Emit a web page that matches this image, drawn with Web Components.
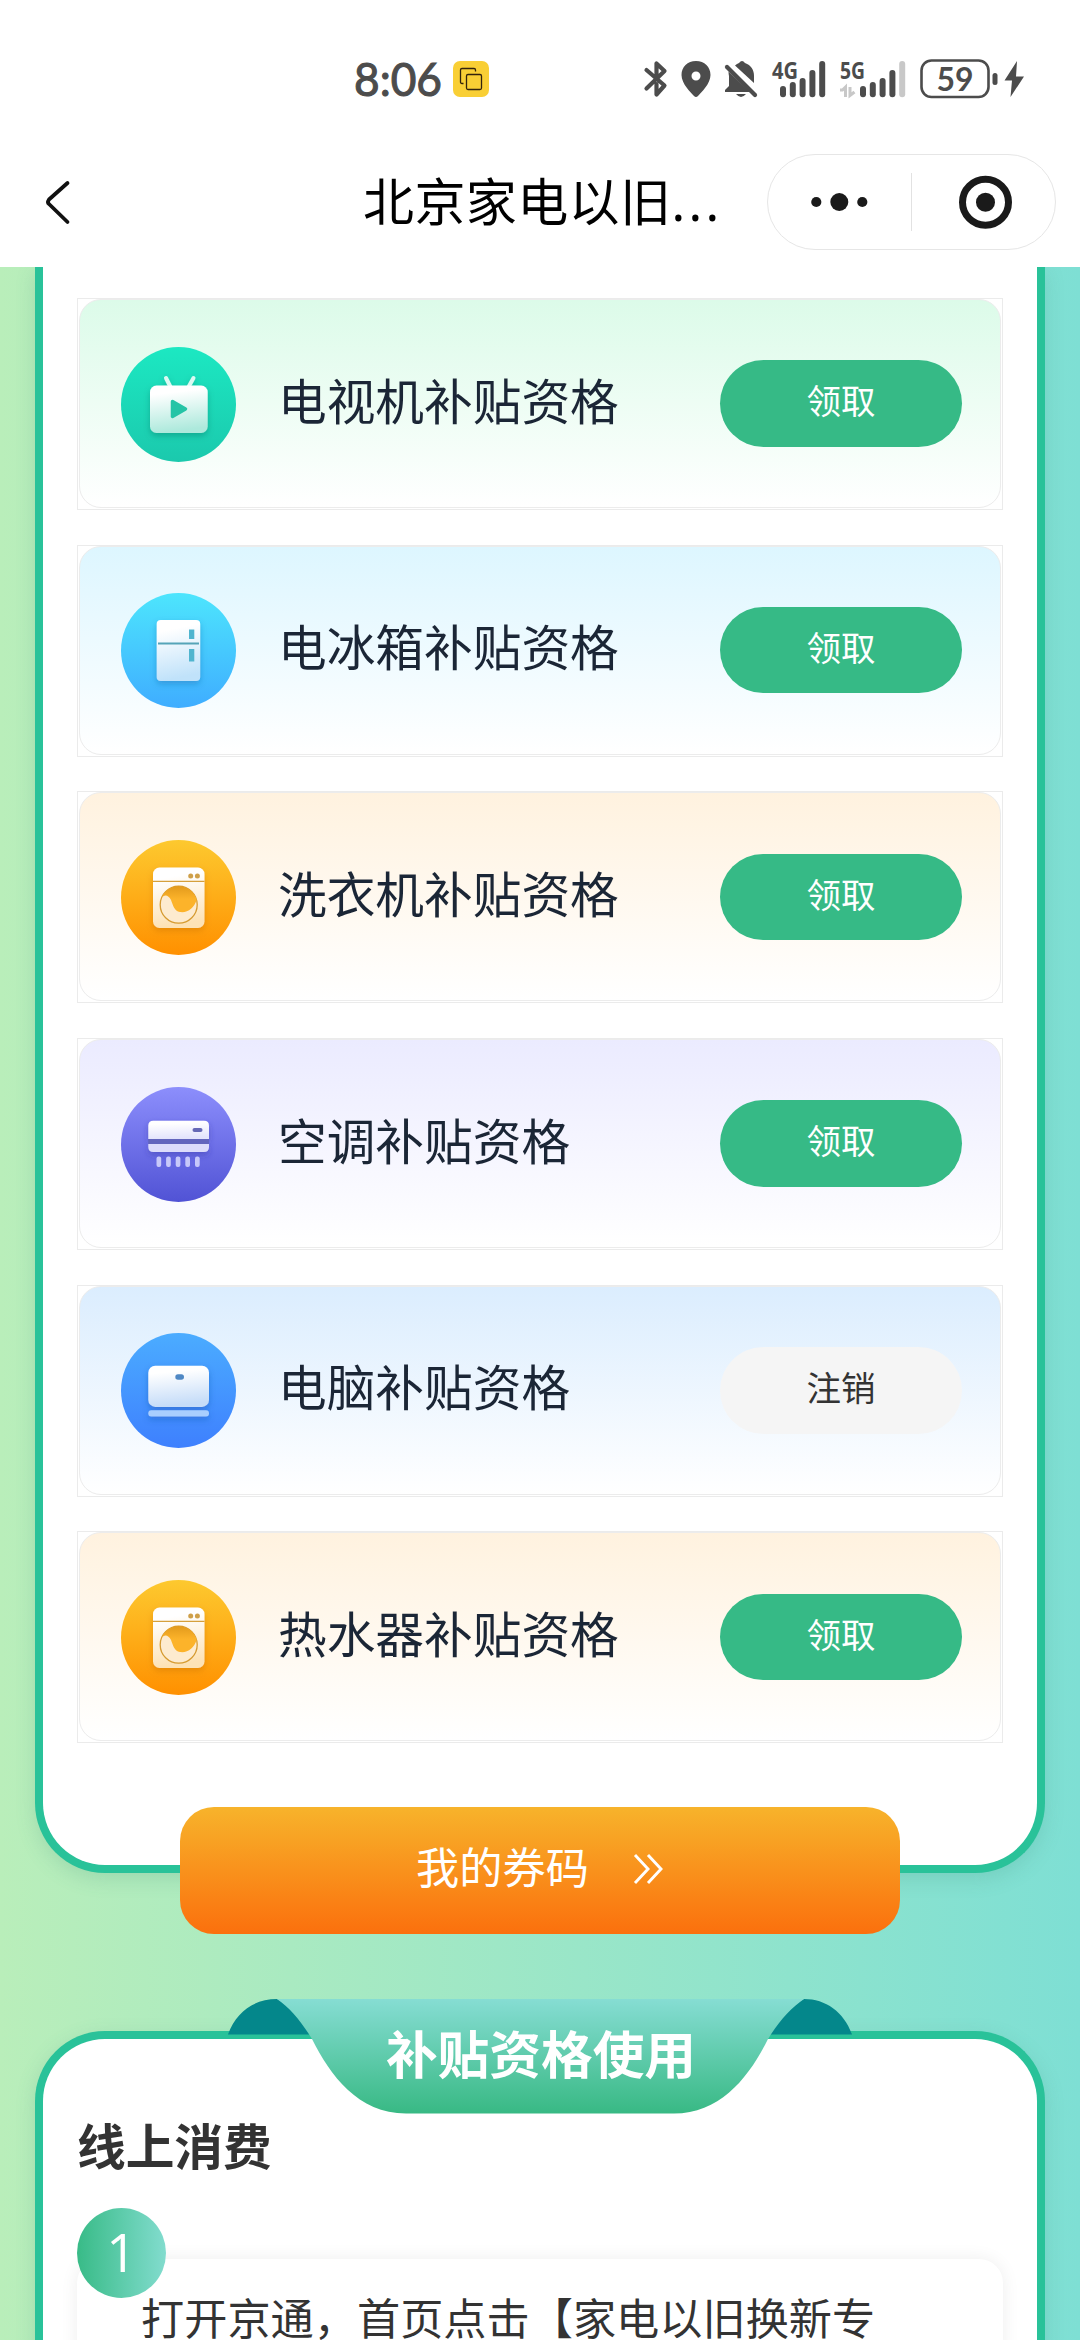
<!DOCTYPE html>
<html lang="zh-CN">
<head>
<meta charset="utf-8">
<title>北京家电以旧换新</title>
<style>
html,body{margin:0;padding:0}
body{width:1080px;height:2340px;overflow:hidden;background:#fff;font-family:"Noto Sans CJK SC",sans-serif;color:#333}
</style>
</head>
<body>
<subsidy-app></subsidy-app>
<script>
const define = (name, html) => customElements.define(name, class extends HTMLElement {
  constructor() {
    super();
    this.attachShadow({ mode: 'open' }).innerHTML = typeof html === 'function' ? html(this) : html;
  }
});

const bars = (x, last) => [86, 82, 78, 70, 61].map((t, i) =>
  `<rect x="${x + i * 9.8}" y="${t - 59}" width="6" height="${97.3 - t}" rx="3" fill="${i === 4 ? last : '#4c4c4c'}"/>`).join('');

define('status-bar', `
<style>
:host{display:flex;box-sizing:border-box;height:134px;padding:59px 0 0 352px;align-items:flex-start;color:#4c4c4c}
svg{display:block;flex:none;overflow:visible;font-family:"Open Sans","Noto Sans",sans-serif}
.time{margin-right:9px}.app{margin-right:155px}.bt{margin-right:14px}.pin{margin-right:13px}.bell{margin-right:15px}
.g4{margin-right:14px}.g5{margin-right:15px}
</style>
<svg class="time" width="92" height="40" fill="#4c4c4c"><text x="2" y="37" font-size="46" font-weight="400" textLength="88" lengthAdjust="spacingAndGlyphs" font-family="Lato" stroke="#4c4c4c" stroke-width="1.1">8:06</text></svg>
<svg class="app" width="36" height="40"><rect y="2" width="36" height="36" rx="7" fill="#f9cf35"/><g fill="none" stroke="#33230c" stroke-width="1.3"><rect x="13.5" y="15.5" width="15" height="15" rx="1.5"/><path d="M10.5 24.500H9Q7.500 24.500 7.500 23V11Q7.500 9.500 9 9.500H21Q22.500 9.500 22.500 11V12.500"/></g></svg>
<svg class="bt" width="23" height="40" fill="none" stroke="#4c4c4c" stroke-width="4.200" stroke-linejoin="round" stroke-linecap="round"><path d="M2.500 11 20.500 26.500 12.500 35.500V25M2.500 29.500 20.500 12 12.500 4.500V17"/></svg>
<svg class="pin" width="30" height="40"><path fill="#4c4c4c" fill-rule="evenodd" d="M15 2C6.500 2 .5 8 .5 16C.5 25 10 33.500 13 37Q15 39 17 37C20 33.500 29.500 25 29.500 16C29.500 8 23.500 2 15 2ZM15 12.500A4.500 4.500 0 1 1 15 21.500A4.500 4.500 0 1 1 15 12.500Z"/></svg>
<svg class="bell" width="33" height="40" fill="#4c4c4c"><path d="M4.500 12.500 26 33H1V31L5 27V17Q4.500 14.500 4.500 12.500ZM11 6.500Q13 4.500 15 4 18 0 21 4C27 6 30 11 30 17V24ZM12 35H22Q17 41 12 35Z"/><path d="M3 8 31 36" stroke="#4c4c4c" stroke-width="4.200" stroke-linecap="round"/></svg>
<svg class="g4" width="54" height="40" fill="#4c4c4c"><text x="0" y="20" font-size="23" font-weight="700" textLength="26" lengthAdjust="spacingAndGlyphs">4G</text>${bars(8, '#4c4c4c')}</svg>
<svg class="g5" width="65" height="40" fill="#4c4c4c"><text x="0" y="20" font-size="23" font-weight="700" textLength="25" lengthAdjust="spacingAndGlyphs">5G</text><path d="M0 31H3M2 31.500 5.500 28V38M10 28V36.500L14.500 33" stroke="#c8c8c8" stroke-width="3" fill="none"/>${bars(20, '#c8c8c8')}</svg>
<svg width="105" height="40" fill="#4c4c4c"><rect x="1.500" y="1.500" width="67" height="36.500" rx="10" fill="none" stroke="#4c4c4c" stroke-width="2.600"/><text x="16.500" y="32" font-size="33" font-weight="700" font-family="Lato" textLength="37" lengthAdjust="spacingAndGlyphs">59</text><rect x="72.500" y="14" width="5" height="12" rx="2.500"/><path d="M97 2 84.500 21.500H92L90.500 38 104 17.500H96Z"/></svg>
`);

define('nav-bar', `
<style>
:host{display:flex;box-sizing:border-box;height:133px;align-items:flex-start;padding:20px 24px 0 43px}
svg{display:block;flex:none}
.back{margin-top:25px}
h1{margin:-8px 0 0 290px;font-weight:400;font-size:51px;line-height:106px;letter-spacing:.4px;white-space:nowrap;color:#000}
h1 span{font-family:"Noto Sans",sans-serif;letter-spacing:3.4px}
.capsule{box-sizing:border-box;display:flex;align-items:center;width:289px;height:96px;margin-left:auto;border:1px solid #e6e6e6;border-radius:48px}
.capsule svg{flex:1}.line{width:1px;height:58px;background:#e2e2e2}
</style>
<svg class="back" width="30" height="48" fill="none" stroke="#111" stroke-width="3.800" stroke-linecap="round" stroke-linejoin="round"><path d="M24.500 4 6 20.500Q4 23.500 6 25L24.500 43"/></svg>
<h1>北京家电以旧<span>...</span></h1>
<div class="capsule"><svg width="143" height="94" fill="#1a1a1a"><circle cx="48.300" cy="47" r="5.100"/><circle cx="71.300" cy="47" r="9"/><circle cx="94.300" cy="47" r="5.100"/></svg><div class="line"></div><svg width="143" height="94"><circle cx="73.500" cy="47.300" r="23" fill="none" stroke="#1a1a1a" stroke-width="7"/><circle cx="73.500" cy="47.300" r="9.500" fill="#1a1a1a"/></svg></div>
`);

const washer = {
  from: '#fdc92f', to: '#ff9000', low: '#fde2b5', shade: '#c56c00',
  art: `<rect x="32" y="27.500" width="51.500" height="60.500" rx="6.500" fill="url(#w)"/><path d="M32 41.300H83.500" stroke="#d6a03a" stroke-width="1.200"/><g fill="#cfa04a"><circle cx="69.700" cy="36" r="2.500"/><circle cx="76.400" cy="36" r="2.500"/></g>`,
  over: `<circle cx="57.700" cy="64.700" r="18.500" fill="#fdebcf" stroke="#d69b30" stroke-width="1.300"/><path d="M40.500 58C43 54 47.500 54.500 50 60C52 65 53 71 59 72C67 73 73 68 75.700 60A18.500 18.500 0 0 0 40.500 58Z" fill="url(#d)"/>`
};
const ICONS = {
  tv: { from: '#1ce8c2', to: '#1bc9ad', low: '#ade9dc', shade: '#08715e',
    art: `<path d="M45 31 49.500 40M72.500 31 67.500 40" stroke="#dcfaf3" stroke-width="4" stroke-linecap="round"/><rect x="29" y="38.500" width="57.700" height="47.500" rx="6.500" fill="url(#w)"/>`,
    over: `<path d="M51.500 54.500 64.500 62 51.500 69.500Z" fill="#25c4a6" stroke="#25c4a6" stroke-width="3.500" stroke-linejoin="round"/>` },
  fridge: { from: '#4de5fd', to: '#3fadff', low: '#c0e2fa', shade: '#1667a8',
    art: `<rect x="35.700" y="27" width="43.500" height="61" rx="4" fill="url(#w)"/>`,
    over: `<path d="M37 50.500H78" stroke="#55a4b8" stroke-width="2"/><path d="M68 36.500H73.300V46H68ZM68 56H73.300V68.500H68Z" fill="#50b5cf"/>` },
  washer,
  air: { from: '#8c8efc', to: '#5153d5', low: '#e3e4fc', shade: '#30329b',
    art: `<path d="M32.300 33.700H83Q88 33.700 88 38.700V52H27.300V38.700Q27.300 33.700 32.300 33.700Z" fill="url(#w)"/><path d="M27.300 57H88V60Q88 65 83 65H32.300Q27.300 65 27.300 60Z" fill="#dcdcfb"/>`,
    over: `<path d="M27.300 52H88V57H27.300Z" fill="#6265bd"/><rect x="71.500" y="41" width="10" height="4" rx="2" fill="#6568b6"/><g fill="#c7c8fa">${[35.5, 45.1, 54.7, 64.3, 74].map(x => `<rect x="${x}" y="69.500" width="4.700" height="10.500" rx="2"/>`).join('')}</g>` },
  pc: { from: '#4bacff', to: '#3e80fe', low: '#c5dcf8', shade: '#1a4fa8',
    art: `<rect x="27.300" y="32.700" width="60.700" height="41.200" rx="7" fill="url(#w)"/><rect x="27.300" y="77.300" width="60.700" height="6.200" rx="3" fill="#a9cefe"/>`,
    over: `<rect x="54.300" y="41.300" width="8.700" height="5.400" rx="2.700" fill="#4f88c4"/>` }
};

define('appliance-icon', el => {
  const i = ICONS[el.getAttribute('kind')];
  return `<style>:host{display:block;flex:none;width:115px;height:115px}svg{display:block}</style>
<svg width="115" height="115" viewBox="0 0 115 115"><defs>
<linearGradient id="c" x2="0" y2="1"><stop stop-color="${i.from}"/><stop offset="1" stop-color="${i.to}"/></linearGradient>
<linearGradient id="d" x2="0" y2="1"><stop stop-color="#e29a1c"/><stop offset=".5" stop-color="#fcb32a"/></linearGradient>
<linearGradient id="w" x2=".15" y2="1"><stop offset=".2" stop-color="#fff"/><stop offset="1" stop-color="${i.low}"/></linearGradient>
<filter id="s" x="-20%" y="-20%" width="140%" height="150%"><feDropShadow dx="0" dy="3" stdDeviation="3" flood-color="${i.shade}" flood-opacity=".4"/></filter>
</defs><circle cx="57.500" cy="57.500" r="57.500" fill="url(#c)"/><g filter="url(#s)">${i.art}</g>${i.over}</svg>`;
});

define('pill-button', `
<style>
:host{display:block;flex:none;box-sizing:border-box;width:242px;height:86.500px;border-radius:44px;background:#36ba86;color:#fff;font-size:34.500px;line-height:78px;text-align:center}
:host([plain]){background:#f5f5f5;color:#333}
</style><slot></slot>`);

define('quota-row', el => `
<style>
:host{display:block;box-sizing:border-box;height:212px;border:1px solid #ebebeb;padding:0 1px 1px}
.card{display:flex;align-items:center;box-sizing:border-box;height:209px;border:1px solid #ececec;border-radius:22px;padding:0 38px 0 41px;background:linear-gradient(${el.getAttribute('tint')},#fff)}
.name{flex:1;padding:0 0 10px 42px;font-size:48.700px;line-height:72px;color:#1b2636;white-space:nowrap}
appliance-icon{position:relative;top:.5px}
pill-button{margin-top:-1px}
</style>
<div class="card"><appliance-icon kind="${el.getAttribute('kind')}"></appliance-icon><div class="name"><slot></slot></div><slot name="action"></slot></div>`);

define('panel-frame', `
<style>
:host{display:block;box-sizing:border-box;margin:0 35px;background:#fff;border:8px solid #29c299;box-shadow:0 6px 20px rgba(60,140,120,.2);padding:0 34px}
:host([edge=bottom]){height:1606px;border-top:0;border-radius:0 0 70px 70px;padding-top:31px}
:host([edge=top]){position:relative;height:420px;border-bottom:0;border-radius:70px 70px 0 0;box-sizing:border-box}
</style><slot></slot>`);

define('voucher-button', `
<style>
:host{position:relative;display:flex;align-items:center;justify-content:center;box-sizing:border-box;width:720px;height:127px;margin:-66px auto 0;border-radius:34px;background:linear-gradient(#f7b32b,#fb700d);color:#fff;font-size:43.200px;line-height:64px;padding:0 0 11px 2px}
svg{margin:8px 0 0 43px}
</style><span><slot></slot></span><svg width="34" height="32" fill="none" stroke="#fff" stroke-width="2.900"><path d="M3 2 16 16 3 30M16 2 29 16 16 30"/></svg>`);

define('ribbon-title', `
<style>
:host{position:absolute;left:185px;top:-41px;width:626px;height:116px}
svg,h2{grid-area:1/1}
:host{display:grid}
svg{display:block}
h2{margin:0;padding:16px 0 0;text-align:center;font-size:51.700px;line-height:76px;font-weight:700;color:#fff}
</style>
<svg width="626" height="116"><defs><linearGradient id="r" x2="0" y2="1"><stop stop-color="#86ddd3"/><stop offset="1" stop-color="#38b984"/></linearGradient></defs>
<path d="M0 36.500C8 14 26 1 49 1L120 36.500ZM624 36.500C616 14 598 1 576 1L504 36.500Z" fill="#04878b"/>
<path d="M49 1C62 10 73 23 84 41C102 77 130 115.500 178 115.500H446C494 115.500 522 77 540 41C551 23 563 10 576 1Z" fill="url(#r)"/></svg>
<h2><slot></slot></h2>`);

define('step-item', `
<style>
:host{display:block;margin-top:26px}
.num{position:relative;z-index:1;width:89px;height:90px;border-radius:50%;background:linear-gradient(90deg,#38bb87,#82dcce);color:#fff;font-family:"Open Sans",sans-serif;font-size:53px;line-height:87px;text-align:center}
.body{margin-top:-39px;height:180px;border-radius:24px;background:#fff;box-shadow:0 0 18px rgba(0,0,0,.07);padding:24px 0 0 64px;font-size:43.200px;line-height:66px;color:#333;white-space:nowrap}
</style><div class="num"><slot name="number"></slot></div><div class="body"><slot></slot></div>`);

const rows = [
  ['tv', '#dcfbe9', '电视机补贴资格'], ['fridge', '#ddf6ff', '电冰箱补贴资格'],
  ['washer', '#fff2df', '洗衣机补贴资格'], ['air', '#ebebff', '空调补贴资格'],
  ['pc', '#dbedfe', '电脑补贴资格'], ['washer', '#fff2df', '热水器补贴资格']
];

define('subsidy-app', `
<style>
:host{display:flex;flex-direction:column;height:2340px;overflow:hidden}
main{flex:1;min-height:0;overflow:hidden;background:linear-gradient(90deg,#b9eeba,#7edfd4)}
.rows{display:flex;flex-direction:column;gap:34.700px}
voucher-button{z-index:1}
.usage{margin-top:97px}
h3{margin:0;padding-top:68px;font-size:48.700px;line-height:75px;font-weight:700;color:#333}
</style>
<status-bar></status-bar><nav-bar></nav-bar>
<main>
<panel-frame edge="bottom"><div class="rows">${rows.map(([k, t, n]) => `<quota-row kind="${k}" tint="${t}">${n}<pill-button slot="action" ${k === 'pc' ? 'plain' : ''}>${k === 'pc' ? '注销' : '领取'}</pill-button></quota-row>`).join('')}</div></panel-frame>
<voucher-button>我的券码</voucher-button>
<panel-frame edge="top" class="usage"><ribbon-title>补贴资格使用</ribbon-title><h3>线上消费</h3><step-item><span slot="number">1</span>打开京通，首页点击【家电以旧换新专</step-item></panel-frame>
</main>`);
</script>
</body>
</html>
